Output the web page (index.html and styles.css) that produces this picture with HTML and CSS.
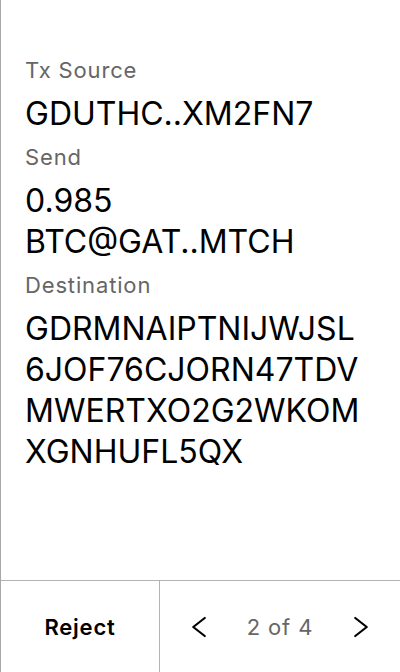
FILE: index.html
```html
<!DOCTYPE html>
<html>
<head>
<meta charset="utf-8">
<link rel="stylesheet" href="styles.css">
</head>
<body>
<div class="screen">
  <div class="content">
    <div class="label">Tx Source</div>
    <div class="value">GDUTHC..XM2FN7</div>
    <div class="label">Send</div>
    <div class="value">0.985<br>BTC@GAT..MTCH</div>
    <div class="label">Destination</div>
    <div class="value">GDRMNAIPTNIJWJSL<br>6JOF76CJORN47TDV<br>MWERTXO2G2WKOM<br>XGNHUFL5QX</div>
  </div>
  <div class="footer">
    <div class="reject">Reject</div>
    <div class="pager">
      <svg class="chev" width="24" height="24" viewBox="0 0 24 24"><path d="M17.75 3 L6.25 12 L17.75 21" fill="none" stroke="#000" stroke-width="2.2" stroke-linecap="round" stroke-linejoin="round"/></svg>
      <span class="count">2 of 4</span>
      <svg class="chev" width="24" height="24" viewBox="0 0 24 24"><path d="M6.25 3 L17.75 12 L6.25 21" fill="none" stroke="#000" stroke-width="2.2" stroke-linecap="round" stroke-linejoin="round"/></svg>
    </div>
  </div>
</div>
</body>
</html>
```
FILE: styles.css
```css
* { box-sizing: border-box; }
html, body { margin: 0; padding: 0; background: #fff; }
body { font-family: Inter, "Noto Sans", sans-serif; color: #000; }
.screen {
  width: 400px;
  height: 672px;
  border-left: 1px solid #a8a8a8;
  display: flex;
  flex-direction: column;
}
.content {
  flex: 1;
  padding: 56px 24px 0 24px;
  display: flex;
  flex-direction: column;
  gap: 9px;
}
.label {
  font-size: 22px;
  line-height: 28px;
  letter-spacing: 0.85px;
  color: #666;
}
.value {
  font-size: 32px;
  line-height: 41px;
  color: #000;
}
.footer {
  height: 92px;
  border-top: 1px solid #b3b3b3;
  display: grid;
  grid-template-columns: 159px 1fr;
}
.reject {
  border-right: 1px solid #b3b3b3;
  display: flex;
  align-items: center;
  justify-content: center;
  font-size: 22px;
  font-weight: 600;
  letter-spacing: 0.8px;
}
.pager {
  display: flex;
  align-items: center;
  justify-content: center;
  gap: 36px;
}
.count {
  font-size: 22px;
  letter-spacing: 0.9px;
  color: #666;
}
.chev { display: block; }
```
